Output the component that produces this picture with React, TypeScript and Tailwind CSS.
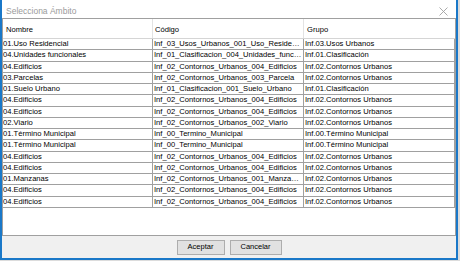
const rows: [string, string, string][] = [
  ['01.Uso Residencial', 'Inf_03_Usos_Urbanos_001_Uso_Residencial', 'Inf.03.Usos Urbanos'],
  ['04.Unidades funcionales', 'Inf_01_Clasificacion_004_Unidades_funcionales', 'Inf.01.Clasificación'],
  ['04.Edificios', 'Inf_02_Contornos_Urbanos_004_Edificios', 'Inf.02.Contornos Urbanos'],
  ['03.Parcelas', 'Inf_02_Contornos_Urbanos_003_Parcela', 'Inf.02.Contornos Urbanos'],
  ['01.Suelo Urbano', 'Inf_01_Clasificacion_001_Suelo_Urbano', 'Inf.01.Clasificación'],
  ['04.Edificios', 'Inf_02_Contornos_Urbanos_004_Edificios', 'Inf.02.Contornos Urbanos'],
  ['04.Edificios', 'Inf_02_Contornos_Urbanos_004_Edificios', 'Inf.02.Contornos Urbanos'],
  ['02.Viario', 'Inf_02_Contornos_Urbanos_002_Viario', 'Inf.02.Contornos Urbanos'],
  ['01.Término Municipal', 'Inf_00_Termino_Municipal', 'Inf.00.Término Municipal'],
  ['01.Término Municipal', 'Inf_00_Termino_Municipal', 'Inf.00.Término Municipal'],
  ['04.Edificios', 'Inf_02_Contornos_Urbanos_004_Edificios', 'Inf.02.Contornos Urbanos'],
  ['04.Edificios', 'Inf_02_Contornos_Urbanos_004_Edificios', 'Inf.02.Contornos Urbanos'],
  ['01.Manzanas', 'Inf_02_Contornos_Urbanos_001_Manzanas', 'Inf.02.Contornos Urbanos'],
  ['04.Edificios', 'Inf_02_Contornos_Urbanos_004_Edificios', 'Inf.02.Contornos Urbanos'],
  ['04.Edificios', 'Inf_02_Contornos_Urbanos_004_Edificios', 'Inf.02.Contornos Urbanos'],
];

export default function App() {
  return (
    <div
      className="w-[460px] h-[261px] bg-[#dcdcdc] text-black"
      style={{ fontFamily: '"Liberation Sans", Arial, sans-serif' }}
    >
      <div className="w-[458px] h-[260px] flex flex-col border-x-2 border-b-2 border-[#1a78c8] bg-white">
        {/* title bar */}
        <div className="h-[18px] flex items-center justify-between pt-[4px] pl-[4px] pr-[8px] bg-white">
          <span className="text-[8.5px] text-[#9a9a9a]">Selecciona Ámbito</span>
          <svg width="9" height="9" viewBox="0 0 9 9" className="text-[#a0a0a0]">
            <path d="M0.5 0.5 L8.5 8.5 M8.5 0.5 L0.5 8.5" stroke="currentColor" strokeWidth="0.9" />
          </svg>
        </div>

        {/* table */}
        <div className="flex-1 border border-[#a0a0a0] bg-white text-[7.6px] leading-[10px]">
          <div className="h-[20px] grid grid-cols-[150px_151px_1fr] border-b border-[#d5d5d5]">
            <div className="flex items-center pt-[3px] pl-[3px] border-r border-[#e3e3e3]">Nombre</div>
            <div className="flex items-center pt-[3px] pl-[2px] border-r border-[#e3e3e3]">Código</div>
            <div className="flex items-center pt-[3px] pl-[3px]">Grupo</div>
          </div>
          {rows.map((r, i) => (
            <div
              key={i}
              className="h-[11.25px] grid grid-cols-[150px_151px_1fr] border-b border-[#a0a0a0]"
            >
              <div className="border-r border-[#a0a0a0] whitespace-nowrap overflow-hidden">
                {r[0]}
              </div>
              <div className="pl-[1px] border-r border-[#a0a0a0] truncate">
                {r[1]}
              </div>
              <div className="pl-[1px] border-r border-[#a0a0a0] whitespace-nowrap overflow-hidden">
                {r[2]}
              </div>
            </div>
          ))}
        </div>

        {/* buttons */}
        <div className="h-[22px] bg-[#f0f0f0] flex items-center justify-center gap-[5px] text-[7.5px]">
          <button className="w-[48px] h-[15px] bg-[#e1e1e1] border border-[#adadad] leading-none">
            Aceptar
          </button>
          <button className="w-[52px] h-[15px] bg-[#e1e1e1] border border-[#adadad] leading-none">
            Cancelar
          </button>
        </div>
      </div>
    </div>
  );
}
